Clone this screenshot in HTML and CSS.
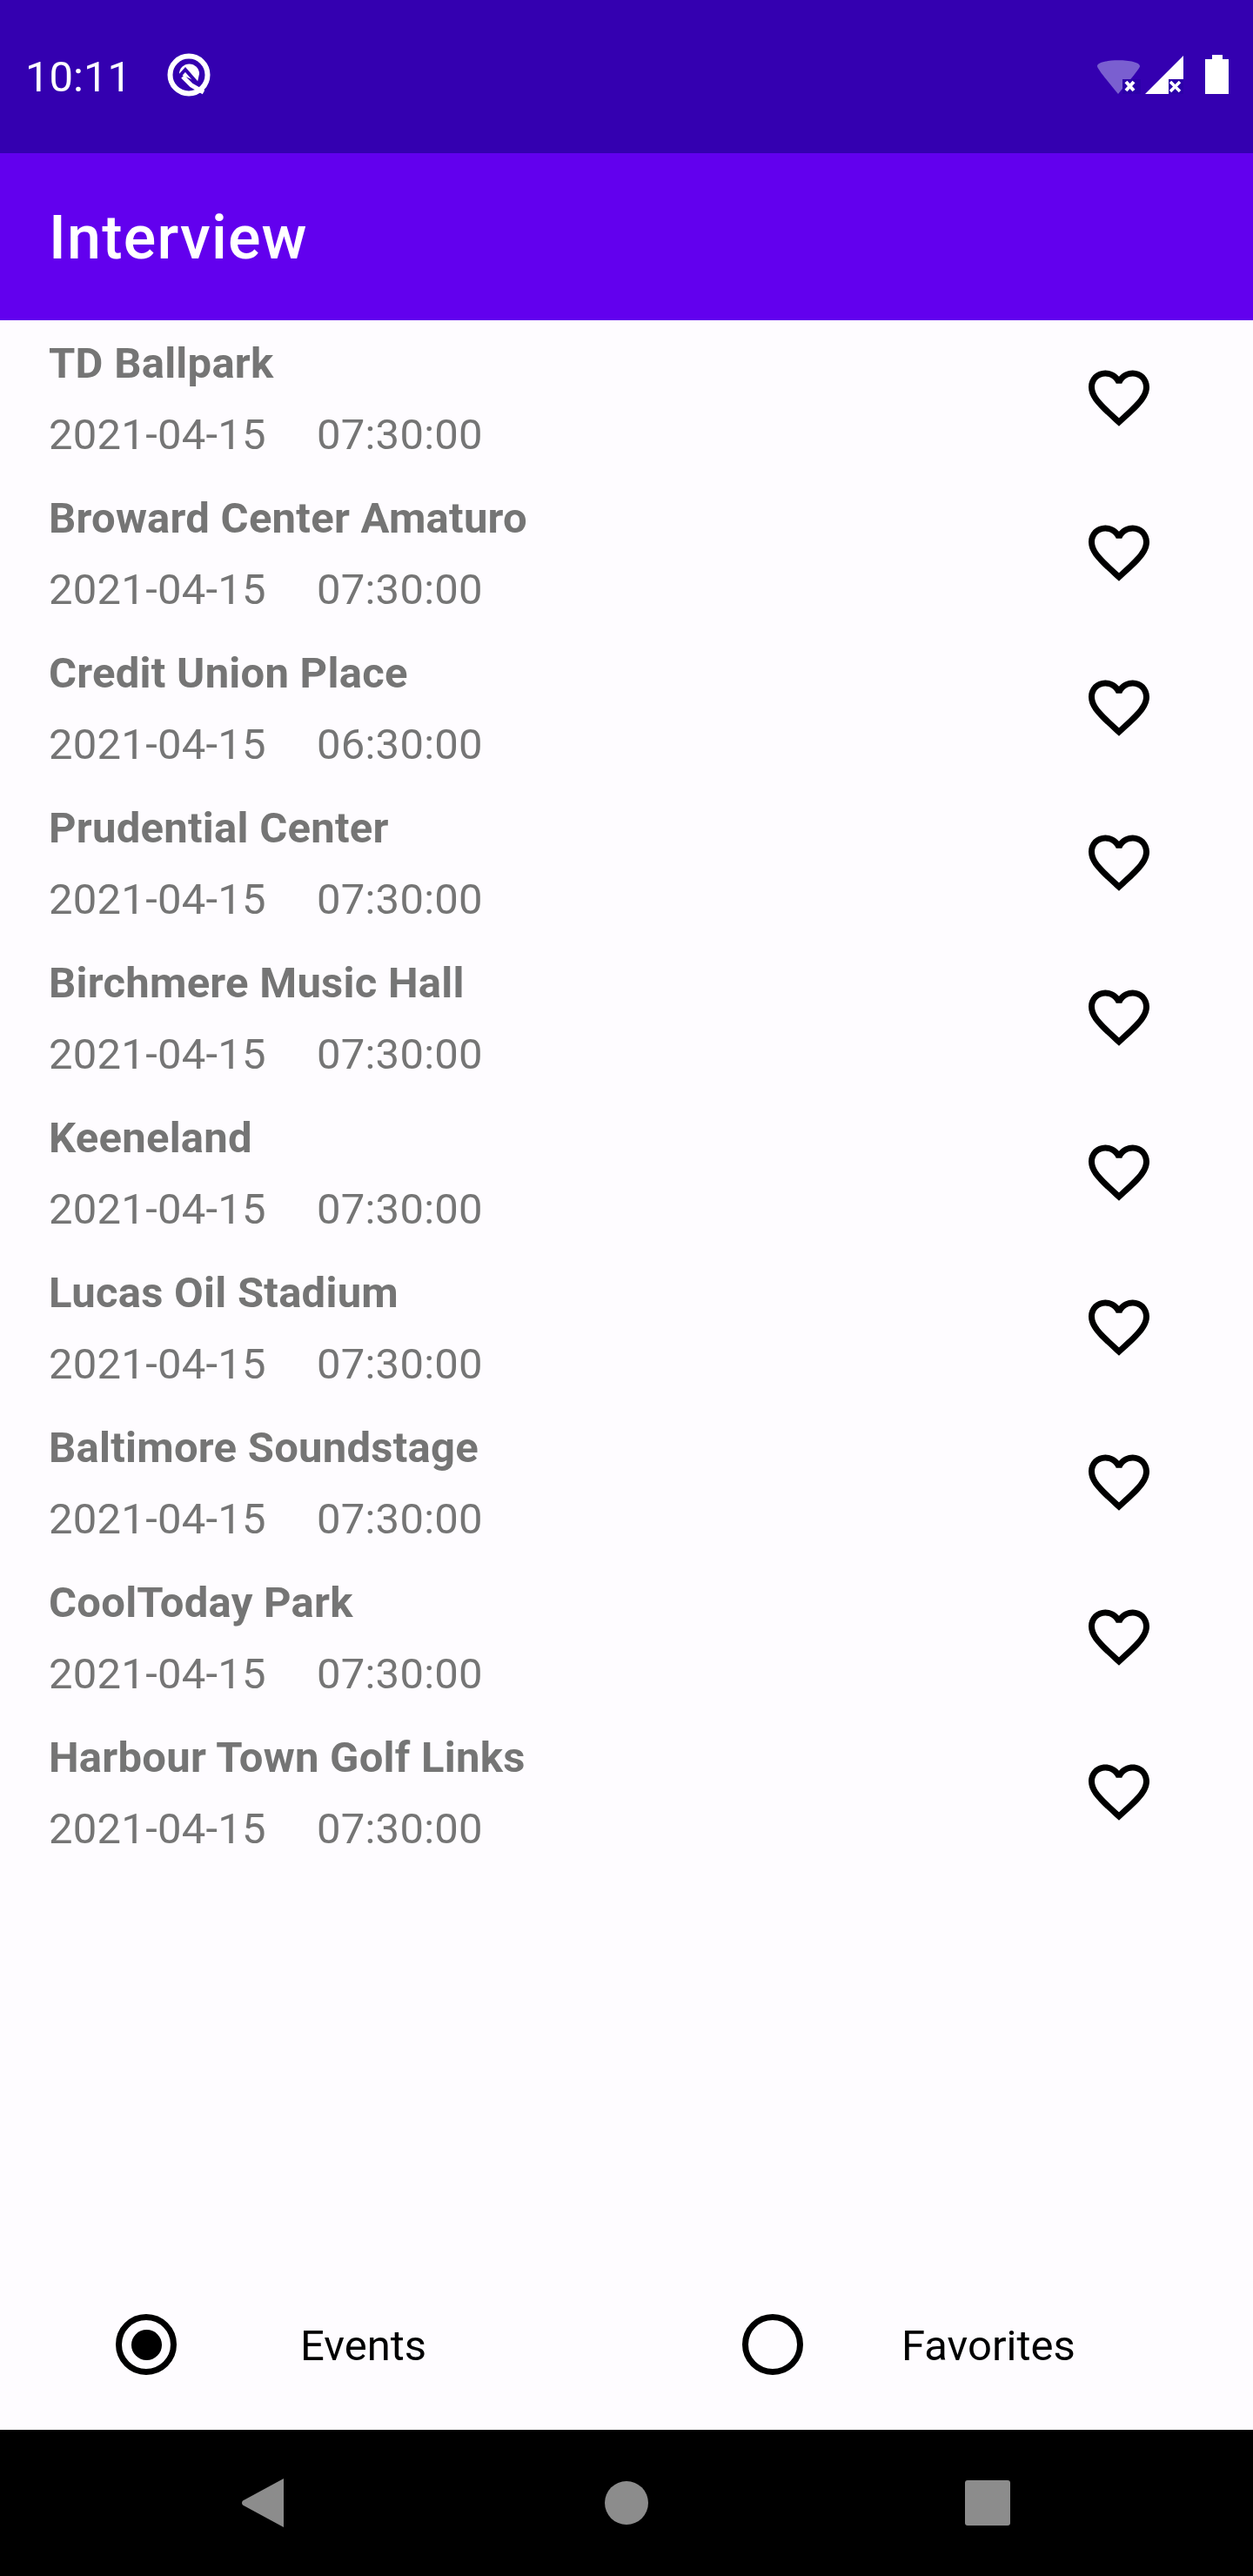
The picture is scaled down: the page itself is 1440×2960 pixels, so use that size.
FILE: index.html
```html
<!DOCTYPE html>
<html>
<head>
<meta charset="utf-8">
<title>Interview</title>
<link rel="stylesheet" href="styles.css">
</head>
<body>
<div class="screen">
  <div class="status">
    <div class="status-left">
      <span class="clock">10:11</span>
      <svg class="at" viewBox="0 0 50 50"><circle cx="25" cy="25" r="21.5" fill="none" stroke="#fff" stroke-width="6"/><path d="M14 24A11.500 11.500 0 0 1 37 24L35 33Z" fill="#fff"/><path d="M11 30L21 19L35 35" fill="none" stroke="#3400b0" stroke-width="4"/><path d="M18 27L28 37L42 45" fill="none" stroke="#fff" stroke-width="5"/></svg>
    </div>
    <div class="status-right">
      <svg class="wifi" viewBox="0 0 51 45"><path d="M1 13C1 4 50 4 50 13C50 16 35 33 25 45C15 33 1 16 1 13Z" fill="#7a5fd0"/><rect x="30" y="28" width="21" height="17" fill="#2c00a8"/><path d="M34 31l9 10m0-10l-9 10" stroke="#fff" stroke-width="4"/></svg>
      <svg class="signal" viewBox="0 0 44 44"><path d="M0 44L44 0V44Z" fill="#fff"/><rect x="27" y="27" width="17" height="17" fill="#2c00a8"/><path d="M29 30l11 11m0-11l-11 11" stroke="#fff" stroke-width="3.5"/></svg>
      <svg class="battery" viewBox="0 0 27 45"><path d="M8 0H20V5H27V45H0V5H8Z" fill="#fff"/></svg>
    </div>
  </div>
  <div class="appbar">Interview</div>
  <div class="list">
    <div class="row"><div class="info"><div class="name">TD Ballpark</div><div class="when"><span>2021-04-15</span><span>07:30:00</span></div></div><svg class="heart" viewBox="0 0 24 24"><path d="M16.5 3c-1.74 0-3.41.81-4.5 2.09C10.91 3.81 9.24 3 7.5 3 4.42 3 2 5.42 2 8.5c0 3.78 3.4 6.86 8.55 11.54L12 21.35l1.45-1.32C18.6 15.36 22 12.28 22 8.5 22 5.42 19.58 3 16.5 3zm-4.4 15.55l-.1.1-.1-.1C7.14 14.24 4 11.39 4 8.5 4 6.5 5.5 5 7.5 5c1.54 0 3.04.99 3.57 2.36h1.87C13.46 5.99 14.96 5 16.5 5c2 0 3.5 1.5 3.5 3.5 0 2.89-3.14 5.74-7.9 10.05z"/></svg></div>
    <div class="row"><div class="info"><div class="name">Broward Center Amaturo</div><div class="when"><span>2021-04-15</span><span>07:30:00</span></div></div><svg class="heart" viewBox="0 0 24 24"><path d="M16.5 3c-1.74 0-3.41.81-4.5 2.09C10.91 3.81 9.24 3 7.5 3 4.42 3 2 5.42 2 8.5c0 3.78 3.4 6.86 8.55 11.54L12 21.35l1.45-1.32C18.6 15.36 22 12.28 22 8.5 22 5.42 19.58 3 16.5 3zm-4.4 15.55l-.1.1-.1-.1C7.14 14.24 4 11.39 4 8.5 4 6.5 5.5 5 7.5 5c1.54 0 3.04.99 3.57 2.36h1.87C13.46 5.99 14.96 5 16.5 5c2 0 3.5 1.5 3.5 3.5 0 2.89-3.14 5.74-7.9 10.05z"/></svg></div>
    <div class="row"><div class="info"><div class="name">Credit Union Place</div><div class="when"><span>2021-04-15</span><span>06:30:00</span></div></div><svg class="heart" viewBox="0 0 24 24"><path d="M16.5 3c-1.74 0-3.41.81-4.5 2.09C10.91 3.81 9.24 3 7.5 3 4.42 3 2 5.42 2 8.5c0 3.78 3.4 6.86 8.55 11.54L12 21.35l1.45-1.32C18.6 15.36 22 12.28 22 8.5 22 5.42 19.58 3 16.5 3zm-4.4 15.55l-.1.1-.1-.1C7.14 14.24 4 11.39 4 8.5 4 6.5 5.5 5 7.5 5c1.54 0 3.04.99 3.57 2.36h1.87C13.46 5.99 14.96 5 16.5 5c2 0 3.5 1.5 3.5 3.5 0 2.89-3.14 5.74-7.9 10.05z"/></svg></div>
    <div class="row"><div class="info"><div class="name">Prudential Center</div><div class="when"><span>2021-04-15</span><span>07:30:00</span></div></div><svg class="heart" viewBox="0 0 24 24"><path d="M16.5 3c-1.74 0-3.41.81-4.5 2.09C10.91 3.81 9.24 3 7.5 3 4.42 3 2 5.42 2 8.5c0 3.78 3.4 6.86 8.55 11.54L12 21.35l1.45-1.32C18.6 15.36 22 12.28 22 8.5 22 5.42 19.58 3 16.5 3zm-4.4 15.55l-.1.1-.1-.1C7.14 14.24 4 11.39 4 8.5 4 6.5 5.5 5 7.5 5c1.54 0 3.04.99 3.57 2.36h1.87C13.46 5.99 14.96 5 16.5 5c2 0 3.5 1.5 3.5 3.5 0 2.89-3.14 5.74-7.9 10.05z"/></svg></div>
    <div class="row"><div class="info"><div class="name">Birchmere Music Hall</div><div class="when"><span>2021-04-15</span><span>07:30:00</span></div></div><svg class="heart" viewBox="0 0 24 24"><path d="M16.5 3c-1.74 0-3.41.81-4.5 2.09C10.91 3.81 9.24 3 7.5 3 4.42 3 2 5.42 2 8.5c0 3.78 3.4 6.86 8.55 11.54L12 21.35l1.45-1.32C18.6 15.36 22 12.28 22 8.5 22 5.42 19.58 3 16.5 3zm-4.4 15.55l-.1.1-.1-.1C7.14 14.24 4 11.39 4 8.5 4 6.5 5.5 5 7.5 5c1.54 0 3.04.99 3.57 2.36h1.87C13.46 5.99 14.96 5 16.5 5c2 0 3.5 1.5 3.5 3.5 0 2.89-3.14 5.74-7.9 10.05z"/></svg></div>
    <div class="row"><div class="info"><div class="name">Keeneland</div><div class="when"><span>2021-04-15</span><span>07:30:00</span></div></div><svg class="heart" viewBox="0 0 24 24"><path d="M16.5 3c-1.74 0-3.41.81-4.5 2.09C10.91 3.81 9.24 3 7.5 3 4.42 3 2 5.42 2 8.5c0 3.78 3.4 6.86 8.55 11.54L12 21.35l1.45-1.32C18.6 15.36 22 12.28 22 8.5 22 5.42 19.58 3 16.5 3zm-4.4 15.55l-.1.1-.1-.1C7.14 14.24 4 11.39 4 8.5 4 6.5 5.5 5 7.5 5c1.54 0 3.04.99 3.57 2.36h1.87C13.46 5.99 14.96 5 16.5 5c2 0 3.5 1.5 3.5 3.5 0 2.89-3.14 5.74-7.9 10.05z"/></svg></div>
    <div class="row"><div class="info"><div class="name">Lucas Oil Stadium</div><div class="when"><span>2021-04-15</span><span>07:30:00</span></div></div><svg class="heart" viewBox="0 0 24 24"><path d="M16.5 3c-1.74 0-3.41.81-4.5 2.09C10.91 3.81 9.24 3 7.5 3 4.42 3 2 5.42 2 8.5c0 3.78 3.4 6.86 8.55 11.54L12 21.35l1.45-1.32C18.6 15.36 22 12.28 22 8.5 22 5.42 19.58 3 16.5 3zm-4.4 15.55l-.1.1-.1-.1C7.14 14.24 4 11.39 4 8.5 4 6.5 5.5 5 7.5 5c1.54 0 3.04.99 3.57 2.36h1.87C13.46 5.99 14.96 5 16.5 5c2 0 3.5 1.5 3.5 3.5 0 2.89-3.14 5.74-7.9 10.05z"/></svg></div>
    <div class="row"><div class="info"><div class="name">Baltimore Soundstage</div><div class="when"><span>2021-04-15</span><span>07:30:00</span></div></div><svg class="heart" viewBox="0 0 24 24"><path d="M16.5 3c-1.74 0-3.41.81-4.5 2.09C10.91 3.81 9.24 3 7.5 3 4.42 3 2 5.42 2 8.5c0 3.78 3.4 6.86 8.55 11.54L12 21.35l1.45-1.32C18.6 15.36 22 12.28 22 8.5 22 5.42 19.58 3 16.5 3zm-4.4 15.55l-.1.1-.1-.1C7.14 14.24 4 11.39 4 8.5 4 6.5 5.5 5 7.5 5c1.54 0 3.04.99 3.57 2.36h1.87C13.46 5.99 14.96 5 16.5 5c2 0 3.5 1.5 3.5 3.5 0 2.89-3.14 5.74-7.9 10.05z"/></svg></div>
    <div class="row"><div class="info"><div class="name">CoolToday Park</div><div class="when"><span>2021-04-15</span><span>07:30:00</span></div></div><svg class="heart" viewBox="0 0 24 24"><path d="M16.5 3c-1.74 0-3.41.81-4.5 2.09C10.91 3.81 9.24 3 7.5 3 4.42 3 2 5.42 2 8.5c0 3.78 3.4 6.86 8.55 11.54L12 21.35l1.45-1.32C18.6 15.36 22 12.28 22 8.5 22 5.42 19.58 3 16.5 3zm-4.4 15.55l-.1.1-.1-.1C7.14 14.24 4 11.39 4 8.5 4 6.5 5.5 5 7.5 5c1.54 0 3.04.99 3.57 2.36h1.87C13.46 5.99 14.96 5 16.5 5c2 0 3.5 1.5 3.5 3.5 0 2.89-3.14 5.74-7.9 10.05z"/></svg></div>
    <div class="row"><div class="info"><div class="name">Harbour Town Golf Links</div><div class="when"><span>2021-04-15</span><span>07:30:00</span></div></div><svg class="heart" viewBox="0 0 24 24"><path d="M16.5 3c-1.74 0-3.41.81-4.5 2.09C10.91 3.81 9.24 3 7.5 3 4.42 3 2 5.42 2 8.5c0 3.78 3.4 6.86 8.55 11.54L12 21.35l1.45-1.32C18.6 15.36 22 12.28 22 8.5 22 5.42 19.58 3 16.5 3zm-4.4 15.55l-.1.1-.1-.1C7.14 14.24 4 11.39 4 8.5 4 6.5 5.5 5 7.5 5c1.54 0 3.04.99 3.57 2.36h1.87C13.46 5.99 14.96 5 16.5 5c2 0 3.5 1.5 3.5 3.5 0 2.89-3.14 5.74-7.9 10.05z"/></svg></div>
  </div>
  <div class="tabs">
    <div class="tab tab-events"><span class="radio checked"></span><span class="tab-label">Events</span></div>
    <div class="tab tab-fav"><span class="radio"></span><span class="tab-label">Favorites</span></div>
  </div>
  <div class="navbar">
    <svg class="nav-back" viewBox="0 0 49 56"><path d="M49 0V56L2 30.500Q0 28 2 25.500Z" fill="#8c8c8c"/></svg>
    <span class="nav-home"></span>
    <span class="nav-recent"></span>
  </div>
</div>
</body>
</html>
```
FILE: styles.css
```css
* { box-sizing: border-box; }
html, body { margin: 0; padding: 0; background: #fefcff; }
.screen { width: 1440px; height: 2960px; display: flex; flex-direction: column; font-family: Roboto, sans-serif; overflow: hidden; }
.status { height: 176px; background: #3400b0; flex: none; display: flex; justify-content: space-between; align-items: center; padding: 0 28px 5px 29px; }
.status-left { display: flex; align-items: center; gap: 41px; }
.clock { color: #fff; font-size: 49px; margin-top: 6px; }
.at { width: 50px; height: 50px; }
.status-right { display: flex; align-items: center; }
.wifi { width: 51px; height: 45px; }
.signal { width: 44px; height: 44px; margin-left: 5px; }
.battery { width: 27px; height: 45px; margin-left: 25px; }
.appbar { height: 192px; background: #6200ee; flex: none; color: #fff; font-size: 70px; font-weight: 500; letter-spacing: 1.2px; display: flex; align-items: center; padding: 2px 0 0 56px; }
.list { flex: 1; display: flex; flex-direction: column; }
.row { height: 178px; display: flex; justify-content: space-between; align-items: center; padding: 0 112px 0 56px; flex: none; }
.info { padding-top: 4px; }
.name { color: #757575; font-size: 49px; font-weight: 700; line-height: 56px; letter-spacing: 0.25px; }
.when { color: #757575; font-size: 49px; line-height: 56px; margin-top: 26px; display: flex; gap: 58px; letter-spacing: 0.25px; }
.heart { width: 84px; height: 84px; }
.tabs { height: 196px; display: flex; flex: none; }
.tab { width: 720px; display: flex; align-items: center; font-size: 49px; color: #000; }
.tab-events { padding-left: 133px; gap: 142px; }
.tab-fav { padding-left: 133px; gap: 113px; }
.tab-label { padding-top: 3px; }
.radio { width: 70px; height: 70px; border-radius: 50%; border: 7px solid #000; display: flex; align-items: center; justify-content: center; }
.radio.checked::after { content: ""; width: 35px; height: 35px; border-radius: 50%; background: #000; }
.navbar { height: 168px; flex: none; background: #000; display: flex; align-items: center; padding-left: 277px; }
.nav-back { width: 49px; height: 56px; }
.nav-home { width: 50px; height: 50px; border-radius: 50%; background: #8c8c8c; margin-left: 369px; }
.nav-recent { width: 52px; height: 52px; border-radius: 3px; background: #8c8c8c; margin-left: 364px; }
```
